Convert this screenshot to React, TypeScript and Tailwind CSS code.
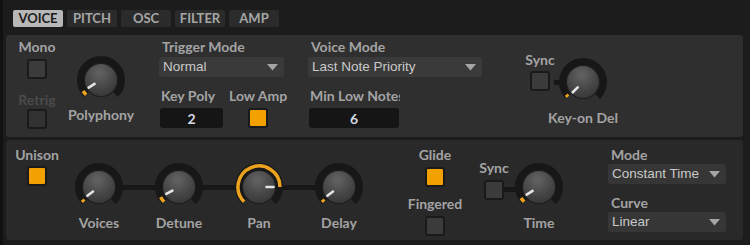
import React from 'react';

const LABEL = "font-['Lato',sans-serif] font-bold text-[14px] leading-[16px] whitespace-nowrap";
const VALUE_FONT = "font-['Liberation_Sans',Arial,sans-serif] text-[13.5px] text-[#c9c9c9]";

function polar(cx: number, cy: number, r: number, deg: number) {
  const a = (deg * Math.PI) / 180;
  return { x: cx + r * Math.sin(a), y: cy - r * Math.cos(a) };
}

function arc(cx: number, cy: number, r: number, from: number, to: number) {
  const s = polar(cx, cy, r, from);
  const e = polar(cx, cy, r, to);
  const large = to - from > 180 ? 1 : 0;
  return `M ${s.x} ${s.y} A ${r} ${r} 0 ${large} 1 ${e.x} ${e.y}`;
}

function Label({ children, className = '', dim = false }: { children: React.ReactNode; className?: string; dim?: boolean }) {
  return <div className={`${LABEL} ${dim ? 'text-[#4a4a4a]' : 'text-[#a3a3a3]'} ${className}`}>{children}</div>;
}

function Knob({ value, id }: { value: number; id: string }) {
  const angle = -135 + 270 * value;
  const end = value < 0.04 ? -127 : angle;
  const p1 = polar(25, 25, 7.5, angle);
  const p2 = polar(25, 25, 14.5, angle);
  return (
    <svg width="50" height="50" viewBox="0 0 50 50" className="block relative z-10">
      <defs>
        <radialGradient id={id} cx="45%" cy="28%" r="75%">
          <stop offset="0%" stopColor="#636363" />
          <stop offset="60%" stopColor="#474747" />
          <stop offset="100%" stopColor="#373737" />
        </radialGradient>
      </defs>
      <path d={arc(25, 25, 20.5, -135, 135)} stroke="#171717" strokeWidth="7" fill="none" />
      <path d={arc(25, 25, 21, -135, end)} stroke="#eba21f" strokeWidth="3.5" fill="none" />
      <circle cx="25" cy="25" r="17" fill="#1c1c1c" />
      <circle cx="25" cy="25" r="16" fill={`url(#${id})`} />
      <line x1={p1.x} y1={p1.y} x2={p2.x} y2={p2.y} stroke="#e4e4e4" strokeWidth="2.6" strokeLinecap="round" />
    </svg>
  );
}

function Check({ on = false, dim = false }: { on?: boolean; dim?: boolean }) {
  return (
    <div
      className={`w-[20px] h-[20px] rounded-[3px] border-2 border-[#1a1a1a] ${
        on ? 'bg-[#f2a100]' : dim ? 'bg-[#323232]' : 'bg-[#3b3b3b]'
      }`}
    />
  );
}

function Select({ text, w, bg = 'bg-[#3a3a3a]' }: { text: string; w: string; bg?: string }) {
  return (
    <div className={`${w} h-[20px] ${bg} rounded-[3px] flex items-center justify-between pl-[4px] pr-[6px]`}>
      <span className={`${VALUE_FONT} leading-[20px] whitespace-nowrap overflow-hidden`}>{text}</span>
      <svg width="11" height="7" viewBox="0 0 11 7" className="shrink-0">
        <path d="M0 0 H11 L5.5 6.5 Z" fill="#a5a5a5" />
      </svg>
    </div>
  );
}

function ValueBox({ text, w }: { text: string; w: string }) {
  return (
    <div className={`${w} h-[20px] bg-[#151515] rounded-[3px] flex items-center justify-center`}>
      <span className="font-['Lato',sans-serif] font-bold text-[14px] text-[#d4dae6]">{text}</span>
    </div>
  );
}

function Tab({ label, active = false }: { label: string; active?: boolean }) {
  return (
    <div
      className={`w-[50px] h-[17px] rounded-[2px] flex items-center justify-center font-['Lato',sans-serif] font-bold text-[13px] ${
        active ? 'bg-[#b8b8b8] text-[#1c1c1c]' : 'bg-[#2b2b2b] text-[#a6a6a6]'
      }`}
    >
      {label}
    </div>
  );
}

export default function App() {
  return (
    <div className="w-[750px] h-[245px] bg-[#1c1c1c] border-l-[3px] border-[#111] overflow-hidden">
      <div className="flex gap-[4px] pl-[10px] pt-[10px]">
        <Tab label="VOICE" active />
        <Tab label="PITCH" />
        <Tab label="OSC" />
        <Tab label="FILTER" />
        <Tab label="AMP" />
      </div>

      {/* upper panel */}
      <div className="ml-[3px] mt-[8px] w-[737px] h-[102px] bg-[#2f2f2f] rounded-[3px] flex items-start pl-[11px] pt-[4px]">
        <div className="w-[40px] flex flex-col items-center">
          <Label>Mono</Label>
          <div className="mt-[4px]"><Check /></div>
          <Label dim className="mt-[13px]">Retrig</Label>
          <div className="mt-[1px]"><Check dim /></div>
        </div>

        <div className="w-[68px] ml-[10px] flex flex-col items-center mt-[16px]">
          <Knob value={0.05} id="k1" />
          <Label className="mt-[2px]">Polyphony</Label>
        </div>

        <div className="w-[125px] ml-[24px] flex flex-col">
          <Label className="pl-[3px]">Trigger Mode</Label>
          <div className="mt-[2px]"><Select text="Normal" w="w-[125px]" /></div>
          <div className="flex mt-[11px]">
            <div className="flex flex-col">
              <Label className="pl-[2px]">Key Poly</Label>
              <div className="mt-[4px] ml-[1px]"><ValueBox text="2" w="w-[63px]" /></div>
            </div>
            <div className="flex flex-col items-center ml-[6px] w-[60px]">
              <Label>Low Amp</Label>
              <div className="mt-[4px]"><Check on /></div>
            </div>
          </div>
        </div>

        <div className="w-[174px] ml-[24px] flex flex-col">
          <Label className="pl-[3px]">Voice Mode</Label>
          <div className="mt-[2px]"><Select text="Last Note Priority" w="w-[174px]" /></div>
          <Label className="pl-[2px] mt-[11px] w-[92px] overflow-hidden">Min Low Notes</Label>
          <div className="mt-[4px] ml-[1px]"><ValueBox text="6" w="w-[90px]" /></div>
        </div>

        <div className="flex items-start ml-[43px] mt-[13px]">
          <div className="w-[30px] flex flex-col items-center">
            <Label>Sync</Label>
            <div className="mt-[3px] relative z-10"><Check /></div>
          </div>
          <div className="w-[8px] h-[5px] bg-[#171717] mt-[28px] -ml-[1px]" />
          <div className="flex flex-col items-center w-[50px] -ml-[4px] relative">
            <div className="mt-[5px]"><Knob value={0} id="k2" /></div>
            <Label className="mt-[3px]">Key-on Del</Label>
          </div>
        </div>
      </div>

      {/* lower panel */}
      <div className="ml-[3px] mt-[3px] w-[737px] h-[100px] bg-[#292929] rounded-[3px] flex items-start pl-[11px] pt-[7px]">
        <div className="w-[40px] flex flex-col items-center">
          <Label>Unison</Label>
          <div className="mt-[3px]"><Check on /></div>
        </div>

        <div className="relative flex gap-[20px] ml-[12px] mt-[15px]">
          <div className="absolute left-[30px] right-[30px] top-[23px] h-[5px] bg-[#171717]" />
          {[
            { l: 'Voices', v: 0.03 },
            { l: 'Detune', v: 0.06 },
            { l: 'Pan', v: 0.833 },
            { l: 'Delay', v: 0.03 },
          ].map((k, i) => (
            <div key={k.l} className="w-[60px] flex flex-col items-center">
              <Knob value={k.v} id={`kb${i}`} />
              <Label className="mt-[3px]">{k.l}</Label>
            </div>
          ))}
        </div>

        <div className="w-[60px] ml-[36px] flex flex-col items-center">
          <Label>Glide</Label>
          <div className="mt-[4px]"><Check on /></div>
          <Label className="mt-[9px]">Fingered</Label>
          <div className="mt-[4px]"><Check /></div>
        </div>

        <div className="flex items-start ml-[14px] mt-[13px]">
          <div className="w-[30px] flex flex-col items-center">
            <Label>Sync</Label>
            <div className="mt-[4px] relative z-10"><Check /></div>
          </div>
          <div className="w-[12px] h-[5px] bg-[#171717] mt-[27px] -ml-[5px]" />
          <div className="flex flex-col items-center w-[50px] -ml-[2px]">
            <div className="mt-[2px]"><Knob value={0.05} id="k3" /></div>
            <Label className="mt-[3px]">Time</Label>
          </div>
        </div>

        <div className="w-[118px] ml-[44px] flex flex-col">
          <Label className="pl-[3px]">Mode</Label>
          <div className="mt-[1px]"><Select text="Constant Time" w="w-[118px]" bg="bg-[#363636]" /></div>
          <Label className="pl-[3px] mt-[11px]">Curve</Label>
          <div className="mt-[1px]"><Select text="Linear" w="w-[118px]" bg="bg-[#363636]" /></div>
        </div>
      </div>
    </div>
  );
}
